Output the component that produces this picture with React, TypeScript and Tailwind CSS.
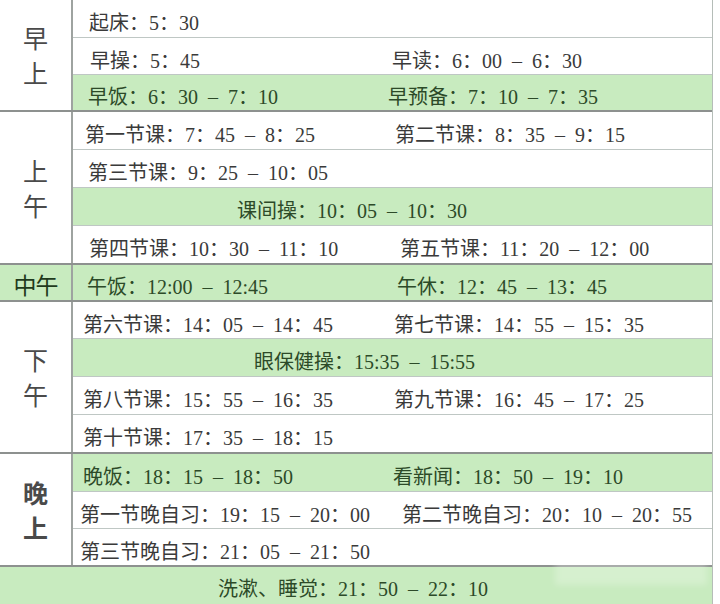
const GREEN = "bg-[#c8ebbf]"

type Row = {
  h: string
  green?: boolean
  a?: string
  aPad?: string
  b?: string
  bPad?: string
  center?: string
  centerPad?: string
}

type Section = {
  label: string[]
  labelClass?: string
  labelGreen?: boolean
  inline?: boolean
  rows: Row[]
}

const sections: Section[] = [
  {
    label: ["早", "上"],
    rows: [
      { h: "h-[38px]", a: "起床：5：30", aPad: "pl-[16px]" },
      { h: "h-[37px]", a: "早操：5：45", aPad: "pl-[17px]", b: "早读：6：00 – 6：30", bPad: "pl-[0px]" },
      { h: "h-[35px]", green: true, a: "早饭：6：30 – 7：10", aPad: "pl-[15px]", b: "早预备：7：10 – 7：35", bPad: "-ml-[4px]" },
    ],
  },
  {
    label: ["上", "午"],
    rows: [
      { h: "h-[38px]", a: "第一节课：7：45 – 8：25", aPad: "pl-[12px]", b: "第二节课：8：35 – 9：15", bPad: "pl-[3px]" },
      { h: "h-[38px]", a: "第三节课：9：25 – 10：05", aPad: "pl-[15px]" },
      { h: "h-[38px]", green: true, center: "课间操：10：05 – 10：30", centerPad: "pl-[164px]" },
      { h: "h-[37px]", a: "第四节课：10：30 – 11：10", aPad: "pl-[16px]", b: "第五节课：11：20 – 12：00", bPad: "pl-[8px]" },
    ],
  },
  {
    label: ["中午"],
    inline: true,
    labelGreen: true,
    rows: [
      { h: "h-[35px]", green: true, a: "午饭：12:00 – 12:45", aPad: "pl-[14px]", b: "午休：12：45 – 13：45", bPad: "pl-[5px]" },
    ],
  },
  {
    label: ["下", "午"],
    rows: [
      { h: "h-[37px]", a: "第六节课：14：05 – 14：45", aPad: "pl-[10px]", b: "第七节课：14：55 – 15：35", bPad: "pl-[2px]" },
      { h: "h-[38px]", green: true, center: "眼保健操：15:35 – 15:55", centerPad: "pl-[181px]" },
      { h: "h-[38px]", a: "第八节课：15：55 – 16：35", aPad: "pl-[10px]", b: "第九节课：16：45 – 17：25", bPad: "pl-[2px]" },
      { h: "h-[37px]", a: "第十节课：17：35 – 18：15", aPad: "pl-[10px]" },
    ],
  },
  {
    label: ["晚", "上"],
    labelClass: "font-bold text-[#3c3c3c]",
    rows: [
      { h: "h-[38px]", green: true, a: "晚饭：18：15 – 18：50", aPad: "pl-[10px]", b: "看新闻：18：50 – 19：10", bPad: "pl-[1px]" },
      { h: "h-[37px]", a: "第一节晚自习：19：15 – 20：00", aPad: "pl-[7px]", b: "第二节晚自习：20：10 – 20：55", bPad: "pl-[10px]" },
      { h: "h-[36px]", a: "第三节晚自习：21：05 – 21：50", aPad: "pl-[7px]" },
    ],
  },
]

function TimeRow({ row, last }: { row: Row; last: boolean }) {
  const text = row.green ? "text-[#2c4a28]" : "text-[#3a3a3a]"
  return (
    <div
      className={`flex items-center pt-[9px] whitespace-nowrap ${row.h} ${row.green ? GREEN : "bg-white"} ${text} ${
        last ? "" : "border-b border-[#bfc7c4]"
      }`}
    >
      {row.center ? (
        <span className={row.centerPad}>{row.center}</span>
      ) : (
        <>
          <span className={`w-[319px] flex-none ${row.aPad}`}>{row.a}</span>
          {row.b && <span className={row.bPad}>{row.b}</span>}
        </>
      )}
    </div>
  )
}

export default function App() {
  return (
    <div className="w-[720px] h-[604px] bg-white overflow-hidden relative">
      <div
        className="w-[713px] border-r border-[#b5bdb8] text-[20px] leading-none [word-spacing:5px]"
        style={{ fontFamily: "'Liberation Serif', 'Noto Sans CJK SC', serif" }}
      >
        {sections.map((s, i) => (
          <div key={i} className="flex border-b-2 border-[#8d918f]">
            <div
              className={`w-[73px] flex-none border-r-2 border-[#9ea3a0] flex flex-col items-center justify-center ${
                s.labelGreen ? `${GREEN} text-[#1f3a1c]` : "bg-white text-[#4a4a4a]"
              } ${s.labelClass ?? ""}`}
              style={{ fontFamily: "'Noto Sans CJK SC', sans-serif" }}
            >
              {s.inline ? (
                <span className="text-[23px] leading-none pt-[3px] tracking-[-1px]">{s.label[0]}</span>
              ) : (
                s.label.map((c, j) => (
                  <span key={j} className="text-[25px] leading-[35px]">
                    {c}
                  </span>
                ))
              )}
            </div>
            <div className="flex-1 flex flex-col">
              {s.rows.map((r, j) => (
                <TimeRow key={j} row={r} last={j === s.rows.length - 1} />
              ))}
            </div>
          </div>
        ))}
        <div className={`h-[37px] flex items-center pt-[6px] ${GREEN} text-[#2c4a28] whitespace-nowrap`}>
          <span className="pl-[218px]">洗漱、睡觉：21：50 – 22：10</span>
        </div>
      </div>
      <div className="absolute left-[555px] top-[559px] w-[152px] h-[26px] bg-white/25 blur-[3px]" />
    </div>
  )
}
